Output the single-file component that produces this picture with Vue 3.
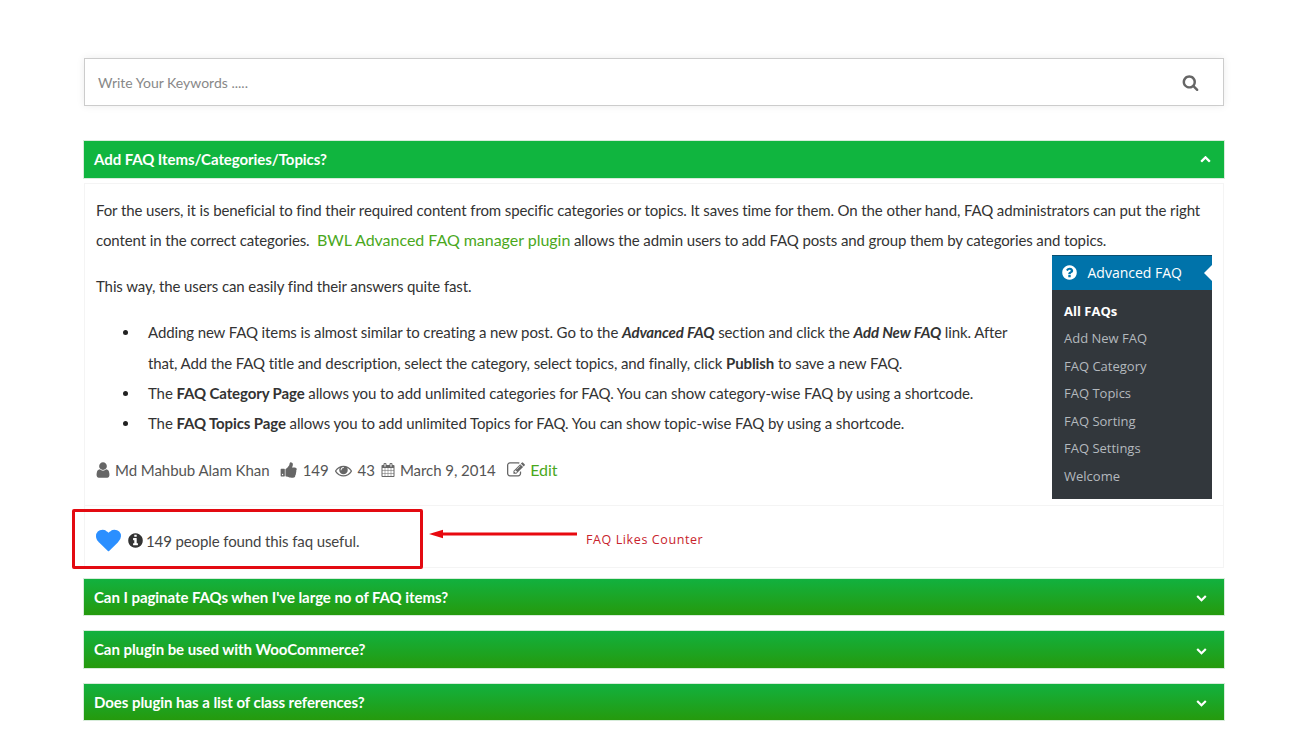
<script setup>
const p = {
  search: 'M1216 832q0-185-131.500-316.500t-316.500-131.500-316.500 131.500-131.500 316.500 131.500 316.500 316.500 131.500 316.500-131.500 131.500-316.500zm512 832q0 52-38 90t-90 38q-54 0-90-38l-343-342q-179 124-399 124-143 0-273.500-55.500t-225-150-150-225-55.500-273.500 55.500-273.500 150-225 225-150 273.500-55.500 273.500 55.500 225 150 150 225 55.500 273.500q0 220-124 399l343 343q37 37 37 90z',
  user: 'M1536 1399q0 109-62.500 187t-150.500 78h-854q-88 0-150.500-78t-62.500-187q0-85 8.500-160.500t31.500-152 58.500-131 94-89 134.500-34.500q131 128 313 128t313-128q76 0 134.500 34.500t94 89 58.500 131 31.500 152 8.500 160.500zm-256-887q0 159-112.500 271.500t-271.500 112.500-271.500-112.500-112.500-271.500 112.500-271.500 271.500-112.500 271.500 112.500 112.500 271.500z',
  thumb: 'M320 1344q0-26-19-45t-45-19q-27 0-45.500 19t-18.500 45q0 27 18.500 45.500t45.500 18.500q26 0 45-18.500t19-45.500zm160-512v640q0 26-19 45t-45 19h-288q-26 0-45-19t-19-45v-640q0-26 19-45t45-19h288q26 0 45 19t19 45zm1184 0q0 86-55 149 15 44 15 76 3 76-43 137 17 56 0 117-15 57-54 94 9 112-49 181-64 76-197 78h-129q-66 0-144-15.500t-121.500-29-120.500-39.500q-123-43-158-44-26-1-45-19.500t-19-44.500v-641q0-25 18-43.500t43-20.500q24-2 76-59t101-121q68-87 101-120 18-18 31-48t17.500-48.500 13.500-60.500q7-39 12.500-61t19.500-52 34-50q19-19 45-19 46 0 82.500 10.500t60 26 40 40.500 24 45 12 50 5 45 .5 39q0 38-9.500 76t-19 60-27.500 56q-3 6-10 18t-11 22-8 24h277q78 0 135 57t57 135z',
  eye: 'M1664 960q-152-236-381-353 61 104 61 225 0 185-131.500 316.500t-316.500 131.500-316.500-131.500-131.500-316.500q0-121 61-225-229 117-381 353 133 205 333.500 326.500t434.500 121.500 434.500-121.500 333.500-326.500zm-720-384q0-20-14-34t-34-14q-125 0-214.500 89.500t-89.500 214.500q0 20 14 34t34 14 34-14 14-34q0-86 61-147t147-61q20 0 34-14t14-34zm848 384q0 34-20 69-140 230-376.500 368.500t-499.500 138.500-499.500-139-376.500-368q-20-35-20-69t20-69q140-229 376.500-368t499.500-139 499.500 139 376.500 368q20 35 20 69z',
  cal: 'M192 1664h288v-288h-288v288zm352 0h320v-288h-320v288zm-352-352h288v-320h-288v320zm352 0h320v-320h-320v320zm-352-384h288v-288h-288v288zm736 736h320v-288h-320v288zm-384-736h320v-288h-320v288zm768 736h288v-288h-288v288zm-384-352h320v-320h-320v320zm-352-864v-288q0-13-9.500-22.500t-22.500-9.500h-64q-13 0-22.500 9.500t-9.500 22.500v288q0 13 9.500 22.500t22.500 9.500h64q13 0 22.500-9.500t9.500-22.500zm736 864h288v-320h-288v320zm-384-384h320v-288h-320v288zm384 0h288v-288h-288v288zm32-480v-288q0-13-9.500-22.500t-22.500-9.500h-64q-13 0-22.500 9.500t-9.500 22.500v288q0 13 9.500 22.500t22.500 9.500h64q13 0 22.500-9.500t9.500-22.500zm384-64v1280q0 52-38 90t-90 38h-1408q-52 0-90-38t-38-90v-1280q0-52 38-90t90-38h128v-96q0-66 47-113t113-47h64q66 0 113 47t47 113v96h384v-96q0-66 47-113t113-47h64q66 0 113 47t47 113v96h128q52 0 90 38t38 90z',
  edit: 'M888 1184l116-116-152-152-116 116v56h96v96h56zm440-720q-16-16-33 1l-350 350q-17 17-1 33t33-1l350-350q17-17 1-33zm80 594v190q0 119-84.500 203.500t-203.500 84.500h-832q-119 0-203.500-84.500t-84.500-203.500v-832q0-119 84.500-203.500t203.500-84.500h832q63 0 117 25 15 7 18 23 3 17-9 29l-49 49q-14 14-32 8-23-6-45-6h-832q-66 0-113 47t-47 113v832q0 66 47 113t113 47h832q66 0 113-47t47-113v-126q0-13 9-22l64-64q15-15 35-7t20 29zm-96-738l288 288-672 672h-288v-288zm444 132l-92 92-288-288 92-92q28-28 68-28t68 28l152 152q28 28 28 68t-28 68z',
  info: 'M1152 1376v-160q0-14-9-23t-23-9h-96v-512q0-14-9-23t-23-9h-320q-14 0-23 9t-9 23v160q0 14 9 23t23 9h96v320h-96q-14 0-23 9t-9 23v160q0 14 9 23t23 9h448q14 0 23-9t9-23zm-128-896v-160q0-14-9-23t-23-9h-192q-14 0-23 9t-9 23v160q0 14 9 23t23 9h192q14 0 23-9t9-23zm640 416q0 209-103 385.500t-279.500 279.500-385.500 103-385.500-103-279.500-279.500-103-385.500 103-385.500 279.500-279.500 385.500-103 385.500 103 279.500 279.500 103 385.500z',
  question: 'M1024 1376v-192q0-14-9-23t-23-9h-192q-14 0-23 9t-9 23v192q0 14 9 23t23 9h192q14 0 23-9t9-23zm256-672q0-88-55.500-163t-138.500-116-170-41q-243 0-371 213-15 24 8 42l132 100q7 6 19 6 16 0 25-12 53-68 86-92 34-24 86-24 48 0 85.500 26t37.500 59q0 38-20 61t-68 45q-63 28-115.500 86.500t-52.500 125.500v36q0 14 9 23t23 9h192q14 0 23-9t9-23q0-19 21.500-49.500t54.500-49.500q32-18 49-28.500t46-35 44.500-48 28-60.500 12.500-81zm384 192q0 209-103 385.500t-279.500 279.500-385.500 103-385.500-103-279.500-279.500-103-385.500 103-385.500 279.500-279.500 385.500-103 385.500 103 279.500 279.500 103 385.500z',
  heart: 'M896 1664q-26 0-44-18l-624-602q-10-8-27.500-26t-55.500-65.500-68-97.500-53.500-121-23.500-138q0-220 127-344t351-124q62 0 126.500 21.500t120 58 95.500 68.500 76 68q36-36 76-68t95.500-68.500 120-58 126.500-21.500q224 0 351 124t127 344q0 221-229 450l-623 601q-18 18-44 18z',
  up: 'M1683 1331l-166 165q-19 19-45 19t-45-19l-531-531-531 531q-19 19-45 19t-45-19l-166-165q-19-19-19-45.500t19-45.500l742-741q19-19 45-19t45 19l742 741q19 19 19 45.500t-19 45.500z',
  down: 'M1683 808l-742 741q-19 19-45 19t-45-19l-742-741q-19-19-19-45.500t19-45.500l166-165q19-19 45-19t45 19l531 531 531-531q19-19 45-19t45 19l166 165q19 19 19 45.500t-19 45.500z'
}
const menu = ['Add New FAQ', 'FAQ Category', 'FAQ Topics', 'FAQ Sorting', 'FAQ Settings', 'Welcome']
const closed = [
  { q: "Can I paginate FAQs when I've large no of FAQ items?", cls: 'h38' },
  { q: 'Can plugin be used with WooCommerce?', cls: 'h39' },
  { q: 'Does plugin has a list of class references?', cls: 'h38' }
]
</script>

<template>
  <div class="page">
    <div class="search">
      <span class="placeholder">Write Your Keywords .....</span>
      <svg class="search-icon" viewBox="0 0 1792 1792"><path :d="p.search" /></svg>
    </div>

    <div class="head open">
      <span>Add FAQ Items/Categories/Topics?</span>
      <svg class="chev" viewBox="0 0 1792 1792"><path :d="p.up" /></svg>
    </div>

    <div class="body">
      <div class="content">
        <p>For the users, it is beneficial to find their required content from specific categories or topics. It saves time for them. On the other hand, FAQ administrators can put the right content in the correct categories. &nbsp;<a class="link big">BWL Advanced FAQ manager plugin</a> allows the admin users to add FAQ posts and group them by categories and topics.</p>

        <aside class="wp">
          <div class="wp-head">
            <svg viewBox="0 0 1792 1792"><path :d="p.question" /></svg>
            <span>Advanced FAQ</span>
            <i class="notch"></i>
          </div>
          <ul class="wp-list">
            <li class="current">All FAQs</li>
            <li v-for="m in menu" :key="m">{{ m }}</li>
          </ul>
        </aside>

        <p>This way, the users can easily find their answers quite fast.</p>

        <ul class="points">
          <li>Adding new FAQ items is almost similar to creating a new post. Go to the <b><i>Advanced FAQ</i></b> section and click the <b><i>Add New FAQ</i></b> link. After that, Add the FAQ title and description, select the category, select topics, and finally, click <b>Publish</b> to save a new FAQ.</li>
          <li>The <b>FAQ Category Page</b> allows you to add unlimited categories for FAQ. You can show category-wise FAQ by using a shortcode.</li>
          <li>The <b>FAQ Topics Page</b> allows you to add unlimited Topics for FAQ. You can show topic-wise FAQ by using a shortcode.</li>
        </ul>

        <div class="meta">
          <svg class="i-user" viewBox="0 0 1792 1792"><path :d="p.user" /></svg>
          <span class="m-author">Md Mahbub Alam Khan</span>
          <svg class="i-thumb" viewBox="0 0 1792 1792"><path :d="p.thumb" /></svg>
          <span class="m-num">149</span>
          <svg class="i-eye" viewBox="0 0 1792 1792"><path :d="p.eye" /></svg>
          <span class="m-num">43</span>
          <svg class="i-cal" viewBox="0 0 1792 1792"><path :d="p.cal" /></svg>
          <span class="m-date">March 9, 2014</span>
          <svg class="i-edit" viewBox="0 0 1792 1792"><path :d="p.edit" /></svg>
          <a class="link m-edit">Edit</a>
        </div>
      </div>

      <div class="like">
        <svg class="heart" viewBox="0 0 1792 1792"><path :d="p.heart" /></svg>
        <svg class="info" viewBox="0 0 1792 1792"><path :d="p.info" /></svg>
        <span>149 people found this faq useful.</span>

        <div class="callout"></div>
        <svg class="arrow" width="150" height="10" viewBox="0 0 150 10">
          <path d="M0 5 L14 0.700 V3.500 H148 V6.500 H14 V9.300 Z" fill="#e8090f" />
        </svg>
        <span class="note">FAQ Likes Counter</span>
      </div>
    </div>

    <div v-for="c in closed" :key="c.q" class="head" :class="c.cls">
      <span>{{ c.q }}</span>
      <svg class="chev" viewBox="0 0 1792 1792"><path :d="p.down" /></svg>
    </div>
  </div>
</template>

<style scoped>
.page {
  width: 1142px;
  margin-left: 83px;
  padding: 58px 0 0;
  font-family: Lato, "Open Sans", sans-serif;
  font-size: 15px;
  letter-spacing: -0.11px;
  color: #333;
  box-sizing: border-box;
}
.search {
  margin-left: 1px;
  height: 48px;
  width: 1140px;
  box-sizing: border-box;
  border: 1px solid #ccc;
  box-shadow: 0 0 8px rgba(0, 0, 0, 0.08);
  display: flex;
  align-items: center;
  justify-content: space-between;
  padding: 0 24px 0 13px;
  background: #fff;
}
.placeholder { color: #888; font-size: 14px; letter-spacing: 0; }
.search-icon { width: 17px; height: 17px; fill: #666; }
.head {
  box-sizing: border-box;
  width: 1142px;
  height: 38px;
  border: 1px solid #d7ecda;
  background: linear-gradient(#12b13f, #259a0d);
  color: #fff;
  font-weight: 700;
  font-size: 15px;
  letter-spacing: -0.05px;
  display: flex;
  align-items: center;
  justify-content: space-between;
  padding: 0 17px 1px 10px;
  margin-bottom: 14px;
}
.head:last-child { margin-bottom: 0; }
.head .chev { margin-top: 2px; }
.head.open {
  margin-top: 34px;
  height: 39px;
  margin-bottom: 4px;
  padding: 0 13px 2px 10px;
  background: #10b53f;
  letter-spacing: -0.07px;
}
.head.open .chev { margin-top: 0; }
.h38 { height: 38px; }
.h39 { height: 39px; }
.chev { width: 11px; height: 11px; fill: #fff; }
.body {
  box-sizing: border-box;
  margin-left: 1px;
  width: 1140px;
  border: 1px solid #f4f4f4;
  margin-bottom: 10px;
}
.content {
  padding: 11px 11px 6px;
  line-height: 30px;
}
.content::after { content: ""; display: block; clear: both; }
.content p { margin: 0 0 16px; }
.link { color: #4aa81c; }
.big { font-size: 16px; letter-spacing: -0.03px; }
.wp {
  float: right;
  width: 160px;
  height: 244px;
  margin: -16px 0 0 20px;
  background: #32373c;
  font-family: "Open Sans", sans-serif;
  letter-spacing: 0;
}
.wp-head {
  position: relative;
  height: 35px;
  background: #0073aa;
  border-top: 1px solid #0b4f70;
  color: #fff;
  display: flex;
  align-items: center;
  gap: 10px;
  padding-left: 10px;
  font-size: 14px;
  box-sizing: border-box;
}
.wp-head svg { width: 17px; height: 17px; fill: #fff; margin-top: -2px; margin-left: -1.500px; }
.notch {
  position: absolute;
  right: 0;
  top: 9px;
  border: 8px solid transparent;
  border-right-color: #fff;
  border-left-width: 0;
}
.wp-list {
  list-style: none;
  margin: 0;
  padding: 7.500px 12px 0;
  font-size: 13px;
  line-height: 27.600px;
  color: #b4b9be;
}
.wp-list .current { color: #fff; font-weight: 700; }
.points {
  margin: 0 0 16px;
  padding-left: 52px;
  list-style: none;
}
.points li { position: relative; line-height: 30px; }
.points li:first-child { line-height: 30.600px; }
.points li::before {
  content: "";
  position: absolute;
  left: -25px;
  top: 13px;
  width: 5px;
  height: 5px;
  border-radius: 50%;
  background: #222;
}
.meta {
  display: flex;
  align-items: center;
  height: 30px;
  padding-top: 1px;
  margin-bottom: 14px;
  color: #555;
  font-size: 15px;
  letter-spacing: -0.05px;
}
.meta svg { width: 18px; height: 18px; fill: #666; flex: none; }
.meta svg.i-user { margin-left: -2.500px; }
.m-author { margin-left: 3.500px; }
.meta svg.i-thumb { margin-left: 10.700px; }
.m-num { margin-left: 4.500px; }
.meta svg.i-eye { width: 17px; height: 17px; margin-left: 6px; }
.i-eye + .m-num { margin-left: 6px; }
.meta svg.i-cal { width: 14px; height: 14px; margin-left: 6.500px; }
.m-date { margin-left: 4.500px; }
.meta svg.i-edit { margin-left: 11px; }
.m-edit { margin-left: 5.500px; font-size: 16px; }
.like {
  position: relative;
  clear: both;
  border-top: 1px solid #f4f4f4;
  height: 62px;
  box-sizing: border-box;
  display: flex;
  align-items: center;
  padding: 8px 0 0 11px;
  color: #444;
}
.heart { width: 25px; height: 25px; fill: #2b8fff; margin-top: -1px; }
.info { width: 17px; height: 17px; fill: #333; margin: 0 2px 0 6px; }
.callout {
  position: absolute;
  left: -13px;
  top: 3px;
  width: 351px;
  height: 60px;
  box-sizing: border-box;
  border: 3px solid #e30a11;
  border-radius: 2px;
}
.arrow { position: absolute; left: 344px; top: 23px; }
.note {
  position: absolute;
  left: 501px;
  top: 25px;
  color: #c8232c;
  font-family: "Open Sans", sans-serif;
  font-size: 12.500px;
  letter-spacing: 0.6px;
}
</style>

<style>
html, body { background: #fff; }
</style>
